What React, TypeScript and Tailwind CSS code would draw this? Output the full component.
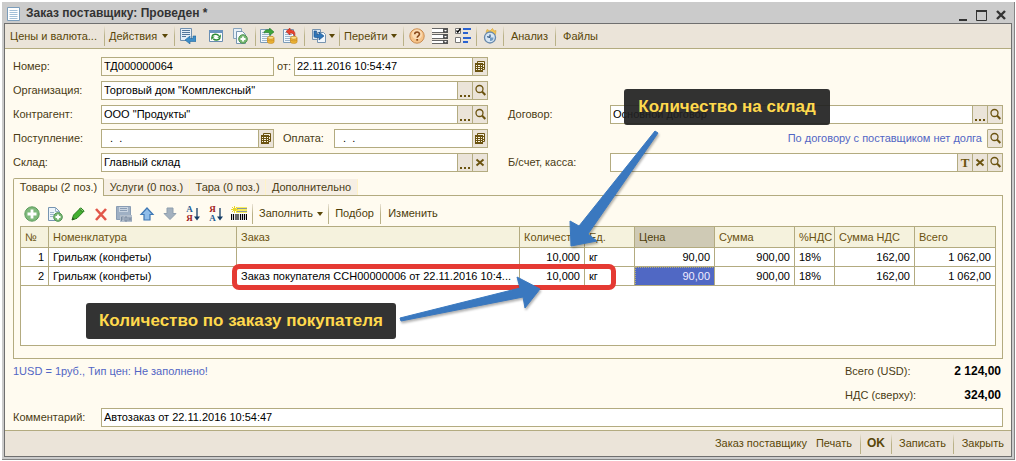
import React from 'react';

type IconProps = { className?: string };

interface FieldProps {
  id: string;
  value: string;
  label: string;
  readOnly?: boolean;
  className?: string;
  children?: React.ReactNode;
}

interface OrderLine {
  num: number;
  item: string;
  order: string;
  qty: string;
  unit: string;
  price: string;
  sum: string;
  vatRate: string;
  vat: string;
  total: string;
}

const lines: OrderLine[] = [
  { num: 1, item: 'Грильяж (конфеты)', order: '', qty: '10,000', unit: 'кг', price: '90,00', sum: '900,00', vatRate: '18%', vat: '162,00', total: '1 062,00' },
  { num: 2, item: 'Грильяж (конфеты)', order: 'Заказ покупателя ССН00000006 от 22.11.2016 10:4...', qty: '10,000', unit: 'кг', price: '90,00', sum: '900,00', vatRate: '18%', vat: '162,00', total: '1 062,00' },
];

const columns = [
  { title: '№', width: 'w-[28px]' },
  { title: 'Номенклатура', width: 'w-[188px]' },
  { title: 'Заказ', width: '' },
  { title: 'Количество', width: 'w-[65px]' },
  { title: 'Ед.', width: 'w-[50px]' },
  { title: 'Цена', width: 'w-[80px]' },
  { title: 'Сумма', width: 'w-[80px]' },
  { title: '%НДС', width: 'w-[40px]' },
  { title: 'Сумма НДС', width: 'w-[80px]' },
  { title: 'Всего', width: 'w-[80px]' },
];

const Svg: React.FC<{ children: React.ReactNode }> = ({ children }) => (
  <svg viewBox="0 0 16 16" className="block shrink-0 w-4 h-4" fill="none" aria-hidden="true">
    {children}
  </svg>
);

const FieldSvg: React.FC<{ children: React.ReactNode }> = ({ children }) => (
  <svg viewBox="0 0 14 15" className="block shrink-0 w-[14px] h-[15px]" fill="none" aria-hidden="true">
    {children}
  </svg>
);

const Sheet = () => (
  <>
    <path d="M1.5 1.5h10v13h-10z" fill="#f4f9fd" stroke="#7d9cb8" />
    <path d="M3 4.5h7M3 6.5h7M3 8.5h7M3 10.5h7M3 12.5h5" stroke="#9db6cc" />
  </>
);

const DocumentIcon = () => (
  <Svg>
    <path d="M1.5 1.5h12v13h-12z" fill="#fff" stroke="#7b9dbb" />
    <path d="M3.5 4.5h8M3.5 6.5h8M3.5 8.5h8M3.5 10.5h8M3.5 12.5h8" stroke="#a3c0d8" />
  </Svg>
);

const ListBackIcon = () => (
  <Svg>
    <path d="M.5 .5h11v12H.5z" fill="#e6eef6" stroke="#6f8fae" />
    <path d="M2 2.500h8M2 4.500h8M2 6.500h8M2 8.500h4" stroke="#54779b" />
    <path d="M5 12l5-4v2.500h3V8h3v5.500h-6V16z" fill="#3f8ec8" stroke="#1f649c" strokeWidth=".6" />
  </Svg>
);

const RefreshIcon = () => (
  <Svg>
    <path d="M1.500 2.500h13v11h-13z" fill="#fff" stroke="#6a8db1" />
    <path d="M1 2h14v3H1z" fill="#6a93bd" />
    <path d="M4 8.500c.8-2.600 5-3 6.800-.8" stroke="#2d8a35" strokeWidth="1.600" />
    <path d="M12.800 6.200v3.500H9.300zM3.200 12V8.600h3.500z" fill="#2d8a35" />
    <path d="M12 10c-1 2.400-4.800 2.800-6.800.7" stroke="#2d8a35" strokeWidth="1.600" />
  </Svg>
);

const PlusBadge = () => (
  <>
    <circle cx="11" cy="11" r="4.300" fill="#78b873" stroke="#4f9350" />
    <path d="M11 8.500v5M8.500 11h5" stroke="#fff" strokeWidth="1.800" />
  </>
);

const CopyIcon = () => (
  <Svg>
    <path d="M1.500 .5h8v10h-8z" fill="#e8f0f7" stroke="#88a4bd" />
    <path d="M4.500 3.500h6l3 3v9h-9z" fill="#f6fafd" stroke="#7795b1" />
    <PlusBadge />
  </Svg>
);

const AddCopyIcon = () => (
  <Svg>
    <path d="M1.500 1.500h7l4 4v9h-11z" fill="#eef5fa" stroke="#7795b1" />
    <path d="M8.500 1.500v4h4M3 6.500h4M3 8.500h4M3 10.500h3" stroke="#9bb4ca" />
    <PlusBadge />
  </Svg>
);

const Coins = () => (
  <>
    <path d="M8.500 10v4c0 .8 1.400 1.300 3.300 1.300S15 14.800 15 14v-4z" fill="#f0b93a" stroke="#c88a1e" strokeWidth=".8" />
    <ellipse cx="11.800" cy="9.800" rx="3.200" ry="1.500" fill="#fbe08a" stroke="#c88a1e" strokeWidth=".8" />
    <path d="M8.500 12c1 1.300 5.500 1.300 6.500 0" stroke="#c88a1e" strokeWidth=".8" />
  </>
);

const PostIcon = () => (
  <Svg>
    <Sheet />
    <path d="M5 5c0-3 3-3.800 5.500-3V0L15 4l-4.500 3.500V5C8.500 4.300 7 4.500 5 5z" fill="#3ea53c" stroke="#24792a" strokeWidth=".6" />
    <Coins />
  </Svg>
);

const UnpostIcon = () => (
  <Svg>
    <Sheet />
    <path d="M4 3.500L8 0v2c4 0 5.500 2 4.800 6-1-2.300-2.300-3-4.800-3v2z" fill="#e8432f" stroke="#b52718" strokeWidth=".6" />
    <Coins />
  </Svg>
);

const EnterFromIcon = () => (
  <Svg>
    <path d="M1.500 1.500h8v10h-8z" fill="#dce8f2" stroke="#7894af" />
    <path d="M6.500 4.500h6l2 2v8h-8z" fill="#f3f8fc" stroke="#7894af" />
    <path d="M3 3v5c0 1 .5 1.500 1.500 1.500H8V12l5-4-5-4v2.500H5.500V3z" fill="#2e75b8" stroke="#1b4f86" strokeWidth=".6" />
  </Svg>
);

const HelpIcon = () => (
  <Svg>
    <circle cx="8" cy="8" r="7.200" fill="#f6c48a" stroke="#c98b50" />
    <circle cx="8" cy="6.500" r="5" fill="#fbdcb4" />
    <path d="M5.700 6.300c0-3 4.800-3 4.800-.2 0 1.700-2.300 1.700-2.300 3.600" stroke="#8a4a1c" strokeWidth="1.600" />
    <path d="M7.300 11h1.800v1.700H7.300z" fill="#8a4a1c" />
  </Svg>
);

const FieldsIcon = () => (
  <Svg>
    <path d="M0 1h11v3H0zM0 7h11v3H0zM0 12h11v3H0z" fill="#fff" />
    <path d="M0 .5h16M0 4.500h16M0 6.500h16M0 10.500h16M0 12.500h16M0 15.500h16" stroke="#666" />
    <path d="M11 0h5v5h-5zM11 6h5v5h-5zM11 12h5v4h-5z" fill="#555" />
    <path d="M12 2h3l-1.500 1.500zM12 8h3l-1.500 1.500zM12 13h3l-1.500 1.500z" fill="#fff" />
  </Svg>
);

const ChecklistIcon = () => (
  <Svg>
    <path d="M.5 .5h5v5h-5zM.5 9.500h5v5h-5z" fill="#fff" stroke="#777" />
    <path d="M1.500 2.500l1.300 1.700L5.500 .5" stroke="#000" strokeWidth="1.300" />
    <path d="M8 0h8v2H8zM8 4h5v2H8zM8 9h8v2H8zM8 13h5v2H8z" fill="#2a62d0" />
  </Svg>
);

const ClockIcon = () => (
  <Svg>
    <path d="M4 4.500l1-3 3 1.500L10.500.5l1.500 2.500 2-.5-.5 4z" fill="#f5c653" stroke="#d29f38" strokeWidth=".6" />
    <circle cx="8" cy="9.500" r="5.500" fill="#d6e6f4" stroke="#6688ab" strokeWidth="1.300" />
    <path d="M8 9.500V6.500M8 9.500l-2.800-.8" stroke="#29507c" strokeWidth="1.200" />
    <path d="M8 9.500h3.500A3.500 3.500 0 0 1 8 13z" fill="#6f9ac2" />
  </Svg>
);

const AddIcon = () => (
  <Svg>
    <circle cx="8" cy="8" r="7.200" fill="#7fb97b" stroke="#5d9c5d" />
    <path d="M8 3.500v9M3.500 8h9" stroke="#fff" strokeWidth="2.800" />
  </Svg>
);

const PencilIcon = () => (
  <Svg>
    <path d="M2 14l1.500-5L9.500 3l3.500 3.200L7 12.300z" fill="#43b02f" stroke="#277d1c" />
    <path d="M9.500 3l1.200-1.200 3.500 3.200L13 6.200z" fill="#8ad47a" stroke="#277d1c" />
    <path d="M2 14l.7-2.500 1.800 1.800z" fill="#2b4c1f" />
  </Svg>
);

const DeleteIcon = () => (
  <Svg>
    <path d="M3 3l10 11M13 3L3 14" stroke="#e2574a" strokeWidth="2.600" />
  </Svg>
);

const FinishEditIcon = () => (
  <Svg>
    <path d="M.5.500h14v13h-14z" fill="#9fb0c4" stroke="#8a9db4" />
    <path d="M3 1h9v5H3z" fill="#c9d4e0" />
    <path d="M4 2.500h7M4 4.500h7" stroke="#8a9db4" />
    <path d="M4 9h12v7H4z" fill="#b4bfcc" />
    <path d="M5.500 11v4M5.500 11h2M5.500 13h2M9 11h2v4H9zM13 11v4M15 11v4M13 13h2" stroke="#75879c" strokeWidth=".9" />
  </Svg>
);

const UpIcon = () => (
  <Svg>
    <path d="M8 2l6 6.500h-3V14H5V8.500H2z" fill="#8fbde9" stroke="#3e77b4" strokeWidth="1.200" />
  </Svg>
);

const DownIcon = () => (
  <Svg>
    <path d="M8 13.500L2 7.500h3V2h6v5.500h3z" fill="#a3b1bf" stroke="#8f9fae" />
  </Svg>
);

const SortIcon: React.FC<{ desc?: boolean }> = ({ desc }) => (
  <span className="flex items-center w-4 h-[18px]">
    <span className="flex flex-col w-[9px] text-[9px] leading-[9px] font-bold font-['Liberation_Serif',serif]">
      <span className={desc ? 'h-[9px] text-[#a02020]' : 'h-[9px] text-[#1b5a94]'}>{desc ? 'Я' : 'А'}</span>
      <span className={desc ? 'h-[9px] text-[#1b5a94]' : 'h-[9px] text-[#a02020]'}>{desc ? 'А' : 'Я'}</span>
    </span>
    <svg viewBox="0 0 6 16" className="w-[6px] h-4" fill="none" aria-hidden="true">
      <path d="M3 2v10" stroke="#153d66" strokeWidth="1.300" />
      <path d="M0 10.500h6L3 14.500z" fill="#153d66" />
    </svg>
  </span>
);

const BarcodeIcon = () => (
  <Svg>
    <path d="M5 1h11v6H5z" fill="#f7ee5c" />
    <path d="M6 2.500h10M6 5.500h10" stroke="#8a98a0" />
    <path d="M0 7h16v8H0z" fill="#fff" />
    <path d="M.5 8v6M2.500 8v6M5 8v6M7 8v6M9.500 8v6M11.500 8v6M13.500 8v6M15.500 8v6" stroke="#000" strokeWidth="1.200" />
    <path d="M3.500 0v7M0 3.500h7M1 1l5 5M6 1L1 6" stroke="#ead62c" />
  </Svg>
);

const CalendarIcon = () => (
  <FieldSvg>
    <path d="M4.500 2.500h7v8h-7z" fill="#f3ecd8" stroke="#6b5310" />
    <path d="M2 4h8v9H2z" fill="#6b5310" />
    <path d="M3 6h1v1H3zM5 6h2v1H5zM8 6h1v1H8zM3 8h1v1H3zM5 8h2v1H5zM8 8h1v1H8zM3 10h1v1H3zM5 10h2v1H5zM8 10h1v1H8z" fill="#fbf6e6" />
    <path d="M10 5.500h2M10 8.500h2" stroke="#6b5310" />
  </FieldSvg>
);

const SearchIcon = () => (
  <FieldSvg>
    <circle cx="6.500" cy="6" r="3.500" stroke="#6b5310" strokeWidth="1.300" />
    <path d="M9 8.500l3.300 3.500" stroke="#6b5310" strokeWidth="2" />
  </FieldSvg>
);

const ClearIcon = () => (
  <FieldSvg>
    <path d="M3.500 4.500l7 6M10.500 4.500l-7 6" stroke="#6b5310" strokeWidth="2" />
  </FieldSvg>
);

const DotsIcon = () => (
  <FieldSvg>
    <path d="M2 12h2v2H2zM6 12h2v2H6zM10 12h2v2h-2z" fill="#6b5310" />
  </FieldSvg>
);

const Caret: React.FC<IconProps> = ({ className = '' }) => (
  <span className={`inline-block border-x-[3px] border-t-4 border-x-transparent border-t-[#5a4708] ${className}`} />
);

const Separator = () => (
  <span className="w-px h-5 shrink-0 bg-linear-to-b from-[#eae3d6] via-[#b9b187] to-[#b9b187]" />
);

const ToolButton: React.FC<{ label: string; children: React.ReactNode; className?: string }> = ({ label, children, className = '' }) => (
  <button type="button" aria-label={label} className={`flex items-center shrink-0 ${className}`}>
    {children}
  </button>
);

const FieldButton: React.FC<{ label: string; children: React.ReactNode }> = ({ label, children }) => (
  <button type="button" aria-label={label} className="flex items-center justify-center w-[15px] shrink-0 border-l border-[#b3ab80] bg-[#ebe4d9] text-[#6b5310]">
    {children}
  </button>
);

const Field: React.FC<FieldProps> = ({ id, value, label, readOnly, className = 'flex-1', children }) => (
  <div className={`flex h-[19px] min-w-0 border border-[#b3ab80] ${readOnly ? 'bg-[#fffbf0]' : 'bg-white'} ${className}`}>
    <input id={id} aria-label={label} defaultValue={value} readOnly={readOnly} className="flex-1 min-w-0 px-0.5 bg-transparent text-black outline-none" />
    {children}
  </div>
);

const Label: React.FC<{ htmlFor: string; className?: string; children: React.ReactNode }> = ({ htmlFor, className = 'w-[88px]', children }) => (
  <label htmlFor={htmlFor} className={`shrink-0 ${className}`}>
    {children}
  </label>
);

const TitleBar = () => (
  <div className="flex items-center h-[21px] pt-0.5 pl-0.5 pr-[5px] text-[#333]">
    <DocumentIcon />
    <h1 className="ml-1 flex-1 text-[12px] font-bold">Заказ поставщику: Проведен *</h1>
    <div className="flex items-center gap-[7px] pt-1">
      <button type="button" aria-label="Свернуть">
        <svg viewBox="0 0 12 12" className="block w-3 h-3"><path d="M2 9h8v2H2z" fill="#333" /></svg>
      </button>
      <button type="button" aria-label="Развернуть">
        <svg viewBox="0 0 12 12" className="block w-3 h-3" fill="none"><path d="M.500 .500h10v10h-10z" stroke="#333" /><path d="M0 0h11v2H0z" fill="#333" /></svg>
      </button>
      <button type="button" aria-label="Закрыть окно">
        <svg viewBox="0 0 12 12" className="block w-3 h-3" fill="none"><path d="M2 1l8 8M10 1l-8 8" stroke="#333" strokeWidth="2.400" /></svg>
      </button>
    </div>
  </div>
);

const MainToolbar = () => (
  <div className="flex items-center h-[25px] px-[5px] border-b border-[#b3ab80] bg-[#ebe4d9] text-[#5a4708]">
    <button type="button" className="w-[94px] text-left">Цены и валюта...</button>
    <Separator />
    <button type="button" className="flex items-center justify-between w-[69px] pl-1 pr-1.5">Действия <Caret /></button>
    <Separator />
    <div className="flex pl-[5px] pr-[7px]">
      <ToolButton label="Показать в списке" className="mr-3"><ListBackIcon /></ToolButton>
      <ToolButton label="Перечитать" className="mr-2"><RefreshIcon /></ToolButton>
      <ToolButton label="Скопировать"><CopyIcon /></ToolButton>
    </div>
    <Separator />
    <div className="flex gap-[7px] pl-[3px] pr-[6px]">
      <ToolButton label="Провести"><PostIcon /></ToolButton>
      <ToolButton label="Отмена проведения"><UnpostIcon /></ToolButton>
    </div>
    <Separator />
    <ToolButton label="Ввести на основании" className="gap-0.5 pl-1.5 pr-1"><EnterFromIcon /><Caret /></ToolButton>
    <Separator />
    <button type="button" className="flex items-center justify-between w-[63px] pl-1 pr-1.5">Перейти <Caret /></button>
    <Separator />
    <div className="flex gap-[7px] px-[5px]">
      <ToolButton label="Справка"><HelpIcon /></ToolButton>
      <ToolButton label="Настройка списка"><FieldsIcon /></ToolButton>
      <ToolButton label="Настройка полей"><ChecklistIcon /></ToolButton>
    </div>
    <Separator />
    <ToolButton label="Напоминание" className="px-[5px]"><ClockIcon /></ToolButton>
    <Separator />
    <button type="button" className="w-[51px]">Анализ</button>
    <Separator />
    <button type="button" className="w-[49px]">Файлы</button>
  </div>
);

const HeaderForm = () => (
  <div className="grid grid-cols-[475fr_495fr] gap-x-5 gap-y-[5px]">
    <div className="flex items-center">
      <Label htmlFor="number">Номер:</Label>
      <Field id="number" label="Номер" value="ТД000000064" readOnly />
      <Label htmlFor="date" className="w-5 pl-[3px]">от:</Label>
      <Field id="date" label="Дата" value="22.11.2016 10:54:47" className="w-[194px]">
        <FieldButton label="Календарь"><CalendarIcon /></FieldButton>
      </Field>
    </div>
    <div />

    <div className="flex items-center">
      <Label htmlFor="company">Организация:</Label>
      <Field id="company" label="Организация" value={'Торговый дом "Комплексный"'}>
        <FieldButton label="Выбрать"><DotsIcon /></FieldButton>
        <FieldButton label="Открыть"><SearchIcon /></FieldButton>
      </Field>
    </div>
    <div />

    <div className="flex items-center">
      <Label htmlFor="partner">Контрагент:</Label>
      <Field id="partner" label="Контрагент" value={'ООО "Продукты"'}>
        <FieldButton label="Выбрать"><DotsIcon /></FieldButton>
        <FieldButton label="Открыть"><SearchIcon /></FieldButton>
      </Field>
    </div>
    <div className="flex items-center">
      <Label htmlFor="contract" className="w-[102px]">Договор:</Label>
      <Field id="contract" label="Договор" value="Основной договор">
        <FieldButton label="Выбрать"><DotsIcon /></FieldButton>
        <FieldButton label="Открыть"><SearchIcon /></FieldButton>
      </Field>
    </div>

    <div className="flex items-center">
      <Label htmlFor="receipt">Поступление:</Label>
      <Field id="receipt" label="Поступление" value="  .  .">
        <FieldButton label="Календарь"><CalendarIcon /></FieldButton>
      </Field>
      <Label htmlFor="payment" className="w-[60px] pl-[9px]">Оплата:</Label>
      <Field id="payment" label="Оплата" value="  .  ." className="w-[154px]">
        <FieldButton label="Календарь"><CalendarIcon /></FieldButton>
      </Field>
    </div>
    <div className="flex items-center justify-end gap-[5px]">
      <a href="#debt" className="text-[#5266c4]">По договору с поставщиком нет долга</a>
      <button type="button" aria-label="Показать долг" className="flex items-center justify-center w-4 h-[19px] border border-[#b3ab80] bg-[#ebe4d9] rounded-[1px]">
        <SearchIcon />
      </button>
    </div>

    <div className="flex items-center">
      <Label htmlFor="store">Склад:</Label>
      <Field id="store" label="Склад" value="Главный склад">
        <FieldButton label="Выбрать"><DotsIcon /></FieldButton>
        <FieldButton label="Очистить"><ClearIcon /></FieldButton>
      </Field>
    </div>
    <div className="flex items-center">
      <Label htmlFor="account" className="w-[102px]">Б/счет, касса:</Label>
      <Field id="account" label="Б/счет, касса" value="">
        <FieldButton label="Выбрать тип">
          <span className="text-[13px] leading-[15px] font-bold font-['Liberation_Serif',serif]">T</span>
        </FieldButton>
        <FieldButton label="Очистить"><ClearIcon /></FieldButton>
        <FieldButton label="Открыть"><SearchIcon /></FieldButton>
      </Field>
    </div>
  </div>
);

const Tabs = () => (
  <div role="tablist" className="flex items-end h-[18px] mt-[6px] -mb-px relative">
    <button type="button" role="tab" aria-selected="true" className="w-[91px] h-[18px] border border-b-0 border-[#b3ab80] rounded-t-[2px] bg-[#fffbf0]">Товары (2 поз.)</button>
    <button type="button" role="tab" aria-selected="false" className="w-[86px] h-4 mb-px border-r border-[#fff3c8] bg-[#f6efe4]">Услуги (0 поз.)</button>
    <button type="button" role="tab" aria-selected="false" className="w-[76px] h-4 mb-px border-r border-[#fff3c8] bg-[#f6efe4]">Тара (0 поз.)</button>
    <button type="button" role="tab" aria-selected="false" className="w-[92px] h-4 mb-px border-r border-[#fff3c8] bg-[#f6efe4]">Дополнительно</button>
  </div>
);

const TableToolbar = () => (
  <div className="flex items-center h-[25px] pl-1 text-[#4d3d0a]">
    <div className="flex items-center gap-[7px] mr-[5px]">
      <ToolButton label="Добавить"><AddIcon /></ToolButton>
      <ToolButton label="Добавить копированием"><AddCopyIcon /></ToolButton>
      <ToolButton label="Изменить строку"><PencilIcon /></ToolButton>
      <ToolButton label="Удалить"><DeleteIcon /></ToolButton>
      <ToolButton label="Закончить редактирование"><FinishEditIcon /></ToolButton>
      <ToolButton label="Вверх"><UpIcon /></ToolButton>
      <ToolButton label="Вниз"><DownIcon /></ToolButton>
      <ToolButton label="Сортировать по возрастанию"><SortIcon /></ToolButton>
      <ToolButton label="Сортировать по убыванию"><SortIcon desc /></ToolButton>
      <ToolButton label="Штрихкод"><BarcodeIcon /></ToolButton>
    </div>
    <Separator />
    <button type="button" className="flex items-center justify-between w-[75px] pl-1.5 pr-[5px]">Заполнить <Caret /></button>
    <Separator />
    <button type="button" className="w-[51px]">Подбор</button>
    <Separator />
    <button type="button" className="w-[64px]">Изменить</button>
  </div>
);

const cell = 'h-[19px] px-1 border-r border-b border-[#b3ab80] last:border-r-0 truncate';

const GoodsTable = () => (
  <div className="min-h-[120px] border border-[#b3ab80] bg-white">
    <table className="w-full table-fixed border-separate border-spacing-0 text-black">
      <thead>
        <tr className="text-left text-[#6b5310]">
          {columns.map((col) => (
            <th
              key={col.title}
              scope="col"
              className={`h-[21px] px-1 border-r border-b border-[#b3ab80] last:border-r-0 font-normal overflow-hidden whitespace-nowrap ${col.width} ${col.title === 'Цена' ? 'bg-[#cfcab5] text-[#4d3d0a]' : 'bg-[#f5f2dd]'}`}
            >
              {col.title}
            </th>
          ))}
        </tr>
      </thead>
      <tbody>
        {lines.map((line) => (
          <tr key={line.num}>
            <td className={`${cell} text-right`}>{line.num}</td>
            <td className={cell}>{line.item}</td>
            <td className={cell}>{line.order}</td>
            <td className={`${cell} text-right`}>{line.qty}</td>
            <td className={cell}>{line.unit}</td>
            <td className={`${cell} text-right ${line.num === 2 ? 'bg-[#5068c4] text-[#f0ecff] outline-1 -outline-offset-1 outline-dotted outline-[#b3ab80]' : ''}`}>{line.price}</td>
            <td className={`${cell} text-right`}>{line.sum}</td>
            <td className={cell}>{line.vatRate}</td>
            <td className={`${cell} text-right`}>{line.vat}</td>
            <td className={`${cell} text-right`}>{line.total}</td>
          </tr>
        ))}
      </tbody>
    </table>
  </div>
);

const Totals = () => (
  <div className="flex justify-between">
    <a href="#prices" className="h-6 leading-6 text-[#5266c4]">1USD = 1руб., Тип цен: Не заполнено!</a>
    <dl className="grid grid-cols-[78px_78px] leading-6 pr-0.5">
      <dt>Всего (USD):</dt>
      <dd className="text-right text-[12px] font-bold text-black">2 124,00</dd>
      <dt>НДС (сверху):</dt>
      <dd className="text-right text-[12px] font-bold text-black">324,00</dd>
    </dl>
  </div>
);

const Footer = () => (
  <div className="flex items-center justify-end h-[26px] pr-[7px] border-t border-[#b3ab80] bg-[#ebe4d9] text-[#5a4708]">
    <button type="button" className="mr-[9px]">Заказ поставщику</button>
    <button type="button" className="mr-2">Печать</button>
    <Separator />
    <button type="button" className="w-[30px] text-[12px] font-bold">OK</button>
    <Separator />
    <button type="button" className="w-[61px]">Записать</button>
    <Separator />
    <button type="button" className="w-[50px] text-right">Закрыть</button>
  </div>
);

// Callouts drawn over the form
const Annotations = () => (
  <>
    <div className="absolute left-[232px] top-[264px] w-[384px] h-[26px] border-[5px] border-[#e53a33] rounded-[7px] pointer-events-none" />
    <p className="absolute left-[624px] top-[89px] w-[206px] h-9 rounded-[3px] bg-[#212121]/92 text-center text-[17px] leading-9 font-bold text-[#ffd94d] whitespace-nowrap">
      Количество на склад
    </p>
    <p className="absolute left-[86px] top-[303px] w-[310px] h-9 rounded-[3px] bg-[#333] text-center text-[17px] leading-9 font-bold text-[#ffd94d] whitespace-nowrap">
      Количество по заказу покупателя
    </p>
    <svg className="absolute left-0 top-0 w-[1016px] h-[461px] pointer-events-none drop-shadow-[1px_2px_1px_rgba(0,0,0,0.3)]" viewBox="0 0 1016 461" fill="#3a78bf" stroke="#3a78bf" strokeLinejoin="round" aria-hidden="true">
      <path d="M655 131l3 2-70 101 9 7-26 5-1-25 9 5z" />
      <path d="M400 318l120-30-3-11 23 12-15 19-2-11-122 24z" />
    </svg>
  </>
);

const App: React.FC = () => (
  <main className="relative pt-0.5 pl-0.5 pr-px pb-px bg-white font-['Liberation_Sans',Arial,sans-serif] text-[11px] leading-[15px] text-[#4a3c14]">
    <div className="px-0.5 pb-0.5 border-r border-b border-[#858585] bg-[#cbcbcb]">
      <TitleBar />
      <div className="border border-[#6f6f6f] bg-[#fffbf0]">
        <MainToolbar />
        <div className="px-2 pt-2 pb-[3px]">
          <HeaderForm />
          <Tabs />
          <div className="px-[6px] pt-[5px] pb-3 border border-[#b3ab80]">
            <TableToolbar />
            <GoodsTable />
          </div>
          <Totals />
          <div className="flex items-center mt-[1px]">
            <Label htmlFor="comment">Комментарий:</Label>
            <Field id="comment" label="Комментарий" value="Автозаказ от 22.11.2016 10:54:47" />
          </div>
        </div>
        <Footer />
      </div>
    </div>
    <Annotations />
  </main>
);

export default App;
